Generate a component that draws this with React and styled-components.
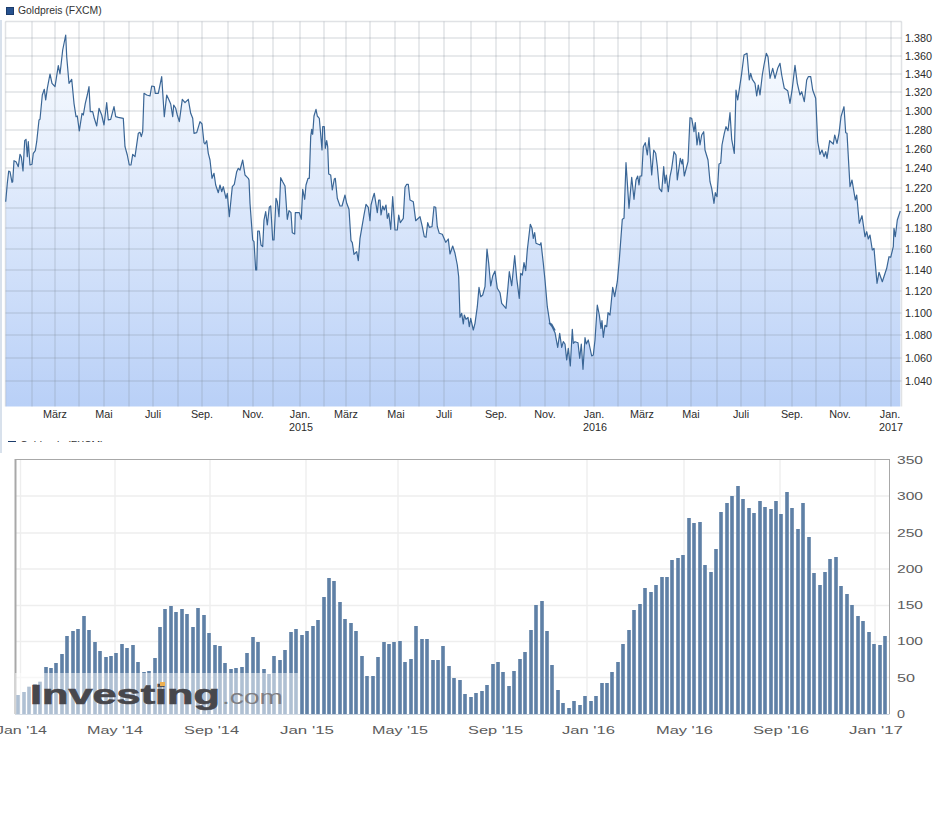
import React from "react";
import styled, { createGlobalStyle } from "styled-components";

const GlobalStyle = createGlobalStyle`
  html, body { margin: 0; padding: 0; background: #fff; }
  body { font-family: "Liberation Sans", Arial, sans-serif; }
`;

/* price trace, sampled in three stretches of the series */
const toPoints = (flat, ox, oy) => {
  const out = [];
  for (let i = 0; i < flat.length; i += 2) out.push([ox + flat[i] / 3, oy + flat[i + 1] / 3]);
  return out;
};
const seriesA = [17,605,22,550,26,513,30,515,36,547,38,545,42,482,48,485,55,500,60,463,64,470,69,513,74,422,78,418,82,470,85,425,90,495,96,493,100,460,106,452,110,425,117,360,120,358,127,285,133,268,137,300,142,265,150,222,156,250,165,260,175,197,180,222,188,150,197,105,200,170,207,250,215,238,222,310,228,350,232,348,238,393,246,340,250,345,256,310,262,285,267,260,271,335,278,335,283,355,290,378,297,325,305,345,312,375,320,308,325,360,332,358,342,320,347,350,355,352,370,355,375,440,382,465,388,495,393,495,398,463,405,470,415,400,420,397,424,410,428,395,432,280,440,285,450,288,455,258,463,260,466,280,475,280,485,230,493,350,500,285,507,300,512,312,518,350,521,315,527,325,532,345,538,365,547,298,555,308,565,298,572,340,578,355,582,400,590,398,600,365,606,372,612,428,615,432,620,422,625,460,630,480,636,535,642,520,647,555,655,578,660,555,665,575,670,560,678,595,682,580,688,650,697,560,703,553,710,515,715,505,720,510,728,480,735,525,745,535];
const seriesB = [27,240,30,310,38,420,42,425,47,510,50,510,53,393,58,393,63,435,68,440,72,360,77,335,82,375,88,322,92,318,98,420,102,420,108,295,112,305,117,350,122,233,128,245,135,258,142,358,147,332,153,338,157,398,164,402,166,338,178,338,184,358,188,268,194,298,198,255,204,235,208,235,212,110,215,88,218,103,222,48,228,28,232,48,238,55,246,150,248,80,253,80,256,145,260,122,263,140,266,222,272,225,277,270,283,237,286,235,292,295,300,318,306,318,315,285,320,310,327,328,333,422,337,428,342,463,350,455,355,482,360,415,366,380,372,345,378,313,385,322,390,362,393,315,398,295,403,280,412,338,416,300,420,300,423,345,428,318,433,330,438,315,442,355,446,340,452,388,458,290,465,390,472,390,476,345,481,368,490,355,495,262,500,253,505,253,510,300,520,305,527,362,540,350,547,380,553,410,558,412,563,368,568,382,576,380,582,320,587,322,592,380,598,400,607,403,617,427,625,417,630,462,638,438,645,460,652,495,656,530,660,652,665,640,670,672,673,645,678,658,684,652,688,680,692,655,700,690,705,670,712,620,717,562,722,590,728,585,735,560,741,447,746,490,752,558,758,528,765,513,772,565,780,578,785,610,798,625,804,560,808,515,815,557,824,467,830,535,838,595,842,520,847,525,852,488,857,512,862,450,871,373,876,385,880,415,884,398,888,430,900,435,903,428,910,490,915,540,922,620,930,672,935,672,945,690];
const seriesC = [28,850,32,850,37,862,45,878,53,922,59,880,65,922,70,905,75,912,80,960,85,925,91,978,97,868,100,910,105,905,114,908,119,955,124,912,129,988,135,893,139,912,145,900,155,948,160,945,165,900,172,795,178,825,183,865,186,842,190,892,195,856,200,860,204,818,210,825,218,742,224,770,232,725,238,660,247,538,252,535,258,368,267,505,275,412,282,478,288,420,293,408,297,435,300,408,305,408,310,320,316,308,322,345,327,293,335,405,341,330,347,340,352,378,358,445,365,455,371,380,375,430,379,405,385,455,390,410,395,385,402,335,408,345,412,420,421,355,426,372,428,358,433,408,444,365,450,233,455,235,462,275,466,248,471,315,476,278,480,315,485,285,491,275,495,330,504,360,510,425,515,445,522,490,526,458,531,470,537,372,542,370,546,315,553,280,558,260,564,272,570,218,575,298,583,340,588,150,593,180,605,100,612,45,621,40,628,120,632,100,637,118,645,130,650,168,655,135,660,165,667,105,672,75,679,40,684,50,690,115,698,85,705,115,713,85,720,70,725,105,733,145,743,152,750,190,757,145,765,76,772,130,780,165,785,155,793,185,800,120,805,110,812,110,818,150,827,175,833,305,840,343,846,330,852,350,857,335,861,355,869,302,880,312,884,285,891,310,897,280,903,230,912,200,917,278,921,280,930,440,936,420,946,480,950,465,958,550,966,527,975,590,980,575,985,597,990,585,997,630,1002,625,1011,730,1017,697,1027,725,1040,685,1047,650,1052,652,1060,620,1062,565,1066,590,1072,540,1081,513];
const pricePoints = [
  ...toPoints(seriesA, 0, 0),
  ...toPoints(seriesB, 240, 100),
  ...toPoints(seriesC, 540, 40),
];
const linePath = pricePoints.map(([x, y], i) => `${i ? "L" : "M"}${x.toFixed(1)} ${y.toFixed(1)}`).join("");
const PLOT = { left: 5.5, right: 901.5, top: 21.5, bottom: 406.5 };
const areaPath = `${linePath}L${pricePoints[pricePoints.length - 1][0].toFixed(1)} ${PLOT.bottom}L${pricePoints[0][0].toFixed(1)} ${PLOT.bottom}Z`;

const priceGridX = [32,55,79,104,129,153,178,202,228,253,273,300,324,346,370,395,419,444,471,496,520,545,569,594,618,641,667,691,717,741,765,792,816,840,866,891];
const priceTicks = [
  ["1.380",38],["1.360",56],["1.340",74],["1.320",92],["1.300",111],["1.280",130],["1.260",149],["1.240",168],["1.220",188],
  ["1.200",208],["1.180",228],["1.160",249],["1.140",270],["1.120",291],["1.100",313],["1.080",335],["1.060",358],["1.040",381],
];
const months = [
  ["März",55],["Mai",104],["Juli",153],["Sep.",202],["Nov.",253],["Jan.",300,"2015"],
  ["März",346],["Mai",396],["Juli",444],["Sep.",496],["Nov.",545],["Jan.",594,"2016"],
  ["März",642],["Mai",691],["Juli",741],["Sep.",792],["Nov.",840],["Jan.",890,"2017"],
];

/* bar tops, left and right half */
const barsLeft = [405,396,380,372,365,321,324,309,282,228,213,207,168,210,246,273,291,288,279,252,264,255,306,336,333,294,201,147,138,156,147,162,201,144,165,219,255,258,309,327,324,321,279,231,246,327,342,288,300,270,216,207,225,213,198,180,111,54,63,126,177,189,213,288,348,348,291,246,252,246,243,306,297,198,237,237,300,300,258,318].map((t) => 560 + t / 3);
const barsRight = [594,600,642,651,639,633,615,552,546,576,618,573,537,516,450,375,363,453,555,630,669,684,663,675,648,663,648,609,609,576,546,492,450,390,372,324,336,315,291,291,240,234,225,114,129,126,255,276,207,96,69,48,18,57,84,99,63,81,87,63,102,36,84,147,69,171,279,315,276,237,231,318,342,375,408,423,456,492,495,468].map((t) => 480 + t / 3);
const barTops = [...barsLeft, ...barsRight];
const BAR_BASE = 714;
const barStep = (885 - 18.3) / (barTops.length - 1);

const volGridX = [20.5,115,210,306,398,495,587,684,780,875];
const volGridY = [496,533,569,605.5,641.5,677.5];
const volTicks = [["350",460,26],["300",496,26],["250",533,26],["200",569,26],["150",605,26],["100",641,26],["50",678,18],["0",714,8]];
const volDates = [
  ["Jan '14",-4,51],["May '14",87,56],["Sep '14",184,55],["Jan '15",280,54],["May '15",372,56],
  ["Sep '15",468,55],["Jan '16",562,53],["May '16",656,57],["Sep '16",753,56],["Jan '17",849,54],
];

const Page = styled.div`
  width: 950px;
  height: 830px;
  overflow: hidden;
  background: #fff;
`;
const Legend = styled.div`
  display: flex;
  gap: 4px;
  box-sizing: border-box;
  height: ${(p) => (p.$clipped ? 8 : 20)}px;
  padding: ${(p) => (p.$clipped ? "7px 0 0 6px" : "2px 0 0 6px")};
  align-items: ${(p) => (p.$clipped ? "flex-start" : "center")};
  overflow: hidden;
  flex: none;
`;
const Swatch = styled.span`
  width: 8px;
  height: 8px;
  flex: none;
  box-sizing: border-box;
  background: #27528f;
  border: 1px solid #1c3c6b;
`;
const LegendText = styled.span`
  font-size: 10.4px;
  line-height: ${(p) => (p.$clipped ? 9 : 8)}px;
  color: #333;
  white-space: nowrap;
`;
const PricePanel = styled.section`
  height: 433px;
  border-left: 2px solid #d8e1ec;
  display: flex;
  flex-direction: column;
`;
const ChartSvg = styled.svg`
  display: block;
  flex: none;
`;
const PriceLabel = styled.text`
  font-family: "Liberation Sans", Arial, sans-serif;
  font-size: 10.8px;
  fill: #2b2b2b;
`;
const VolLabel = styled.text`
  font-family: "Liberation Sans", Arial, sans-serif;
  font-size: 11px;
  fill: #5c5c5c;
`;
const Brand = styled.text`
  font-family: "Liberation Sans", Arial, sans-serif;
  font-size: 28px;
  font-weight: 700;
  fill: #47474c;
  stroke: #47474c;
  stroke-width: 0.7px;
`;
const BrandSuffix = styled.text`
  font-family: "Liberation Sans", Arial, sans-serif;
  font-size: 21px;
  fill: #7d7d82;
`;

function PriceChart() {
  return (
    <ChartSvg width={948} height={414} viewBox="2 20 948 414">
      <defs>
        <linearGradient id="priceFill" gradientUnits="userSpaceOnUse" x1="0" y1="30" x2="0" y2="406">
          <stop offset="0" stopColor="#fbfdff" />
          <stop offset="1" stopColor="#b9d0f7" />
        </linearGradient>
      </defs>
      <path d={areaPath} fill="url(#priceFill)" />
      <g stroke="#7f8791" strokeOpacity="0.24" strokeWidth="1.5">
        {priceGridX.map((x) => <line key={x} x1={x} x2={x} y1={PLOT.top} y2={PLOT.bottom} />)}
        {priceTicks.map(([t, y]) => <line key={t} x1={PLOT.left} x2={PLOT.right} y1={y} y2={y} />)}
        <line x1={PLOT.left} x2={PLOT.left} y1={PLOT.top} y2={PLOT.bottom} />
        <line x1={PLOT.right} x2={PLOT.right} y1={PLOT.top} y2={PLOT.bottom} />
        <line x1={PLOT.left} x2={PLOT.right} y1={PLOT.top} y2={PLOT.top} />
      </g>
      <path d={linePath} fill="none" stroke="#3a6696" strokeWidth="1.2" strokeLinejoin="round" />
      {priceTicks.map(([t, y]) => (
        <PriceLabel key={t} x={905} y={y + 4}>{t}</PriceLabel>
      ))}
      {months.map(([m, x, year], i) => (
        <g key={i}>
          <PriceLabel x={x} y={418} textAnchor="middle">{m}</PriceLabel>
          {year && <PriceLabel x={x + 1} y={431} textAnchor="middle">{year}</PriceLabel>}
        </g>
      ))}
    </ChartSvg>
  );
}

function VolumeChart() {
  return (
    <ChartSvg width={950} height={295} viewBox="0 453 950 295">
      <g stroke="#eeeeee" strokeWidth="1.4">
        {volGridX.map((x) => <line key={x} x1={x} x2={x} y1={460} y2={BAR_BASE} />)}
        {volGridY.map((y) => <line key={y} x1={16} x2={889} y1={y} y2={y} />)}
      </g>
      <line x1={15.5} x2={15.5} y1={459} y2={BAR_BASE} stroke="#a8a8a8" strokeWidth="2" />
      <line x1={15} x2={889.5} y1={459.5} y2={459.5} stroke="#a8a8a8" />
      <line x1={889.5} x2={889.5} y1={459} y2={BAR_BASE} stroke="#a8a8a8" />
      <line x1={15} x2={889.5} y1={714.5} y2={714.5} stroke="#c6d0dc" />
      {barTops.map((top, i) => (
        <rect key={i} x={Math.round(18.3 + i * barStep - 2) + 0.2} y={top} width={3.6} height={BAR_BASE - top} fill="#5f80a6" />
      ))}
      <rect x={15} y={673} width={285} height={41.5} fill="#fff" fillOpacity="0.5" />
      <Brand x={30} y={704} textLength={190} lengthAdjust="spacingAndGlyphs">Investing</Brand>
      <BrandSuffix x={222} y={704} textLength={61} lengthAdjust="spacingAndGlyphs">.com</BrandSuffix>
      <rect x={160} y={682} width={5} height={4} fill="#edb052" />
      {volTicks.map(([t, y, w]) => (
        <VolLabel key={t} x={897} y={y + 4} textLength={w} lengthAdjust="spacingAndGlyphs">{t}</VolLabel>
      ))}
      {volDates.map(([d, x, w]) => (
        <VolLabel key={d} x={x} y={734} textLength={w} lengthAdjust="spacingAndGlyphs">{d}</VolLabel>
      ))}
    </ChartSvg>
  );
}

export default function App() {
  return (
    <Page>
      <GlobalStyle />
      <Legend>
        <Swatch />
        <LegendText>Goldpreis (FXCM)</LegendText>
      </Legend>
      <PricePanel>
        <PriceChart />
        <Legend $clipped>
          <Swatch />
          <LegendText $clipped>Goldpreis (FXCM)</LegendText>
        </Legend>
      </PricePanel>
      <VolumeChart />
    </Page>
  );
}
